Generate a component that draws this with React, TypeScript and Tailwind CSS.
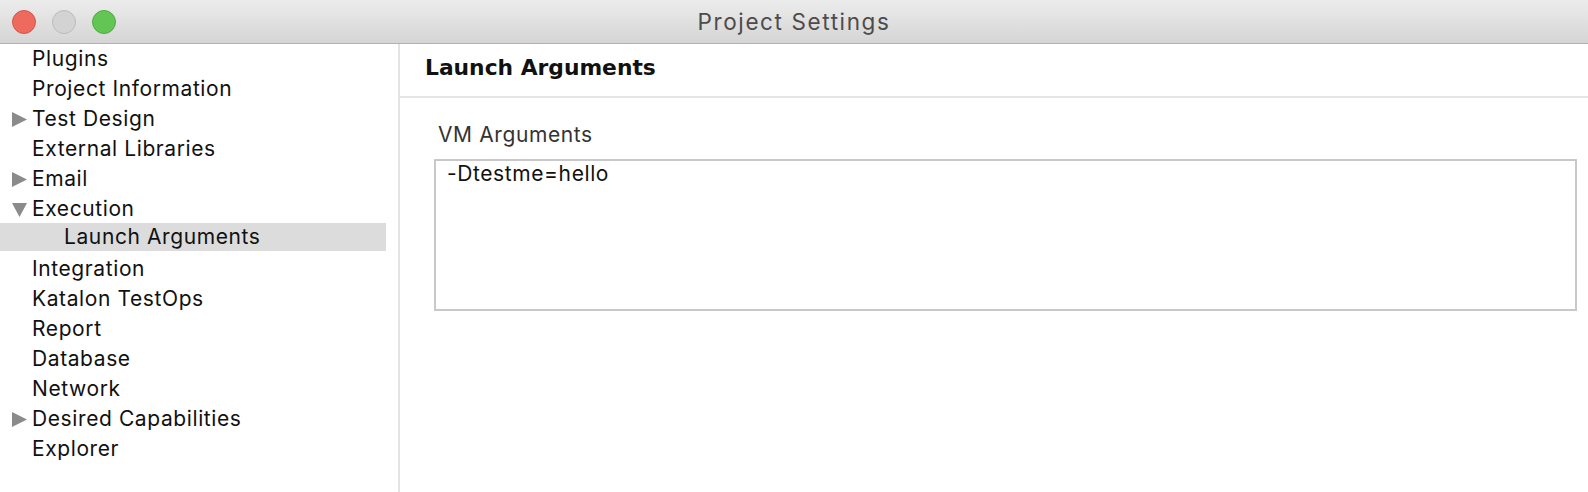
import React from "react";

type Item = {
  label: string;
  depth?: number;
  arrow?: "right" | "down";
  selected?: boolean;
};

const items: Item[] = [
  { label: "Plugins" },
  { label: "Project Information" },
  { label: "Test Design", arrow: "right" },
  { label: "External Libraries" },
  { label: "Email", arrow: "right" },
  { label: "Execution", arrow: "down" },
  { label: "Launch Arguments", depth: 1, selected: true },
  { label: "Integration" },
  { label: "Katalon TestOps" },
  { label: "Report" },
  { label: "Database" },
  { label: "Network" },
  { label: "Desired Capabilities", arrow: "right" },
  { label: "Explorer" },
];

const Arrow: React.FC<{ dir: "right" | "down" }> = ({ dir }) => (
  <svg width="17" height="17" viewBox="0 0 17 17" className="shrink-0">
    {dir === "right" ? (
      <polygon points="1,1 16,8.5 1,16" fill="#8b8b8b" />
    ) : (
      <polygon points="1,2 16,2 8.5,16" fill="#8b8b8b" />
    )}
  </svg>
);

const App: React.FC = () => {
  return (
    <div className="w-[1588px] h-[492px] bg-white flex flex-col overflow-hidden font-['Inter',sans-serif] text-[21px] tracking-[0.6px] text-[#111]">
      {/* Title bar */}
      <div className="h-[44px] shrink-0 relative flex items-center justify-center bg-gradient-to-b from-[#ececec] to-[#d5d5d5] border-b border-[#b1b1b1]">
        <div className="absolute left-[12px] top-[10px] flex gap-[16px]">
          <span className="w-[24px] h-[24px] rounded-full bg-[#ee6a5f] border border-[#d4564c]" />
          <span className="w-[24px] h-[24px] rounded-full bg-[#d3d3d3] border border-[#bcbcbc]" />
          <span className="w-[24px] h-[24px] rounded-full bg-[#62c554] border border-[#4fae42]" />
        </div>
        <span className="text-[22.5px] text-[#4c4c4c] tracking-[1.6px]">Project Settings</span>
      </div>

      <div className="flex flex-1 min-h-0">
        {/* Sidebar */}
        <div className="w-[400px] shrink-0 border-r-2 border-[#e3e3e3] pr-[12px]">
          {items.map((it) =>
            it.selected ? (
              <div
                key={it.label}
                className="h-[28px] mt-[-1px] mb-[3px] flex items-center bg-[#dcdcdc] pl-[64px]"
              >
                {it.label}
              </div>
            ) : (
              <div key={it.label} className="h-[30px] flex items-center">
                <div className="w-[32px] flex justify-center pl-[6px]">
                  {it.arrow && <Arrow dir={it.arrow} />}
                </div>
                <span>{it.label}</span>
              </div>
            )
          )}
        </div>

        {/* Content */}
        <div className="flex-1 flex flex-col">
          <div className="h-[54px] shrink-0 flex items-center pl-[25px] pb-[4px] border-b-2 border-[#e5e5e5] font-['DejaVu_Sans',sans-serif] font-bold text-[21.8px] tracking-normal">
            Launch Arguments
          </div>
          <div className="pl-[34px] pr-[11px] pt-[25px]">
            <div className="text-[#333] leading-[24px] mb-[12px] pl-[4px]">VM Arguments</div>
            <div className="h-[152px] border-2 border-[#c8c8c8] px-[11px] pt-[1px] leading-[24px]">
              -Dtestme=hello
            </div>
          </div>
        </div>
      </div>
    </div>
  );
};

export default App;
